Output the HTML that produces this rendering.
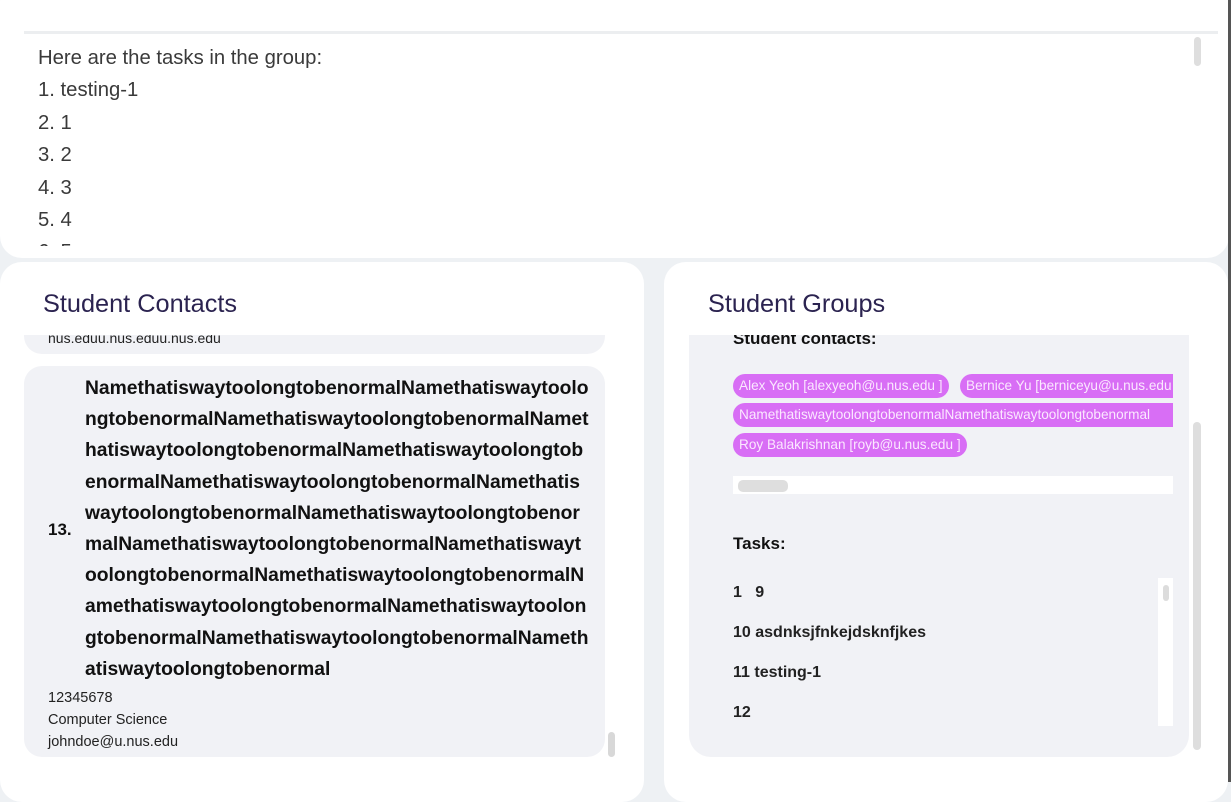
<!DOCTYPE html>
<html><head><meta charset="utf-8"><style>
*{margin:0;padding:0;box-sizing:border-box}
body{width:1231px;height:782px;overflow:hidden;background:#eef1f4;font-family:"Liberation Sans",sans-serif;position:relative}
.abs{position:absolute}
.panel{position:absolute;background:#fff;border-radius:22px}
.top{left:0;top:-20px;width:1229px;height:278px}
.toptext{position:absolute;left:38px;top:42px;font-size:20.3px;color:#3a3a3a;line-height:32.4px;font-weight:300}
.h{position:absolute;font-size:25.3px;color:#2b2350;}
.card{position:absolute;background:#f1f2f6;border-radius:18px}
.nm{position:absolute;left:85px;top:373px;font-size:19.3px;font-weight:bold;line-height:31.2px;white-space:nowrap;color:#111}
.chip{position:absolute;height:24px;border-radius:12px;background:#d86ef5;color:#fbe8ff;font-size:13.6px;line-height:24px;padding:0 6px;white-space:nowrap;overflow:hidden}
.task{position:absolute;left:733px;font-size:16px;font-weight:bold;color:#222}
</style></head><body>
<div class="panel top"></div>
<div class="abs" style="left:24px;top:31px;width:1194px;height:3px;background:#eceef0"></div>
<div class="abs" style="left:1194px;top:37px;width:7px;height:29px;border-radius:4px;background:#dedede"></div>
<div class="abs" style="left:1228px;top:0;width:3px;height:782px;background:#555"></div>
<div class="toptext" style="height:204px;overflow:hidden">Here are the tasks in the group:<br>1. testing-1<br>2. 1<br>3. 2<br>4. 3<br>5. 4<br>6. 5</div>

<div class="panel" style="left:0;top:262px;width:644px;height:540px"></div>
<div class="panel" style="left:664px;top:262px;width:564px;height:540px"></div>

<div class="h" style="left:43px;top:290px">Student Contacts</div>
<div class="h" style="left:708px;top:290px">Student Groups</div>

<div class="abs" style="left:0;top:335px;width:644px;height:447px;overflow:hidden">
 <div class="card" style="left:24px;top:-60px;width:581px;height:79px"></div>
 <div class="abs" style="left:48px;top:-5px;font-size:14px;color:#222">nus.eduu.nus.eduu.nus.edu</div>
</div>
<div class="card" style="left:24px;top:366px;width:581px;height:391px"></div>
<div class="abs" style="left:48px;top:520px;font-size:17px;font-weight:bold;color:#111">13.</div>
<div class="nm">Namethatiswaytoolongtobenormal<span>Namethatiswaytoolo</span><br>ngtobenormalNamethatiswaytoolongtobenormalNamet<br>hatiswaytoolongtobenormalNamethatiswaytoolongtob<br>enormalNamethatiswaytoolongtobenormalNamethatis<br>waytoolongtobenormalNamethatiswaytoolongtobenor<br>malNamethatiswaytoolongtobenormalNamethatiswayt<br>oolongtobenormalNamethatiswaytoolongtobenormalN<br>amethatiswaytoolongtobenormalNamethatiswaytoolon<br>gtobenormalNamethatiswaytoolongtobenormalNameth<br>atiswaytoolongtobenormal</div>
<div class="abs" style="left:48px;top:687px;font-size:14.5px;line-height:22px;color:#222">12345678<br>Computer Science<br>johndoe@u.nus.edu</div>
<div class="abs" style="left:608px;top:732px;width:7px;height:25px;border-radius:4px;background:#d8d8d8"></div>

<div class="abs" style="left:689px;top:335px;width:500px;height:422px;background:#f1f2f6;border-radius:0 0 22px 22px;overflow:hidden">
 <div class="abs" style="left:44px;top:-6px;font-size:17px;font-weight:bold;color:#111">Student contacts:</div>
</div>
<div class="abs" style="left:733px;top:374px;width:440px;height:90px;overflow:hidden">
 <div class="chip" style="left:0;top:0">Alex Yeoh [alexyeoh@u.nus.edu ]</div>
 <div class="chip" style="left:227px;top:0;width:260px">Bernice Yu [berniceyu@u.nus.edu ]</div>
 <div class="chip" style="left:0;top:29px;width:500px">NamethatiswaytoolongtobenormalNamethatiswaytoolongtobenormal</div>
 <div class="chip" style="left:0;top:59px">Roy Balakrishnan [royb@u.nus.edu ]</div>
</div>
<div class="abs" style="left:733px;top:476px;width:440px;height:18px;background:#fff"></div>
<div class="abs" style="left:738px;top:480px;width:50px;height:12px;border-radius:5px;background:#dedede"></div>
<div class="abs" style="left:733px;top:534px;font-size:17px;font-weight:bold;color:#111">Tasks:</div>
<div class="abs" style="left:1158px;top:578px;width:15px;height:148px;background:#fff"></div>
<div class="abs" style="left:1163px;top:585px;width:6px;height:16px;border-radius:3px;background:#dcdcdc"></div>
<div class="task" style="top:584px">1&nbsp;&nbsp;&nbsp;9</div>
<div class="task" style="top:624px">10 asdnksjfnkejdsknfjkes</div>
<div class="task" style="top:664px">11 testing-1</div>
<div class="task" style="top:704px">12</div>
<div class="abs" style="left:1193px;top:422px;width:8px;height:328px;border-radius:4px;background:#dedede"></div>
</body></html>
